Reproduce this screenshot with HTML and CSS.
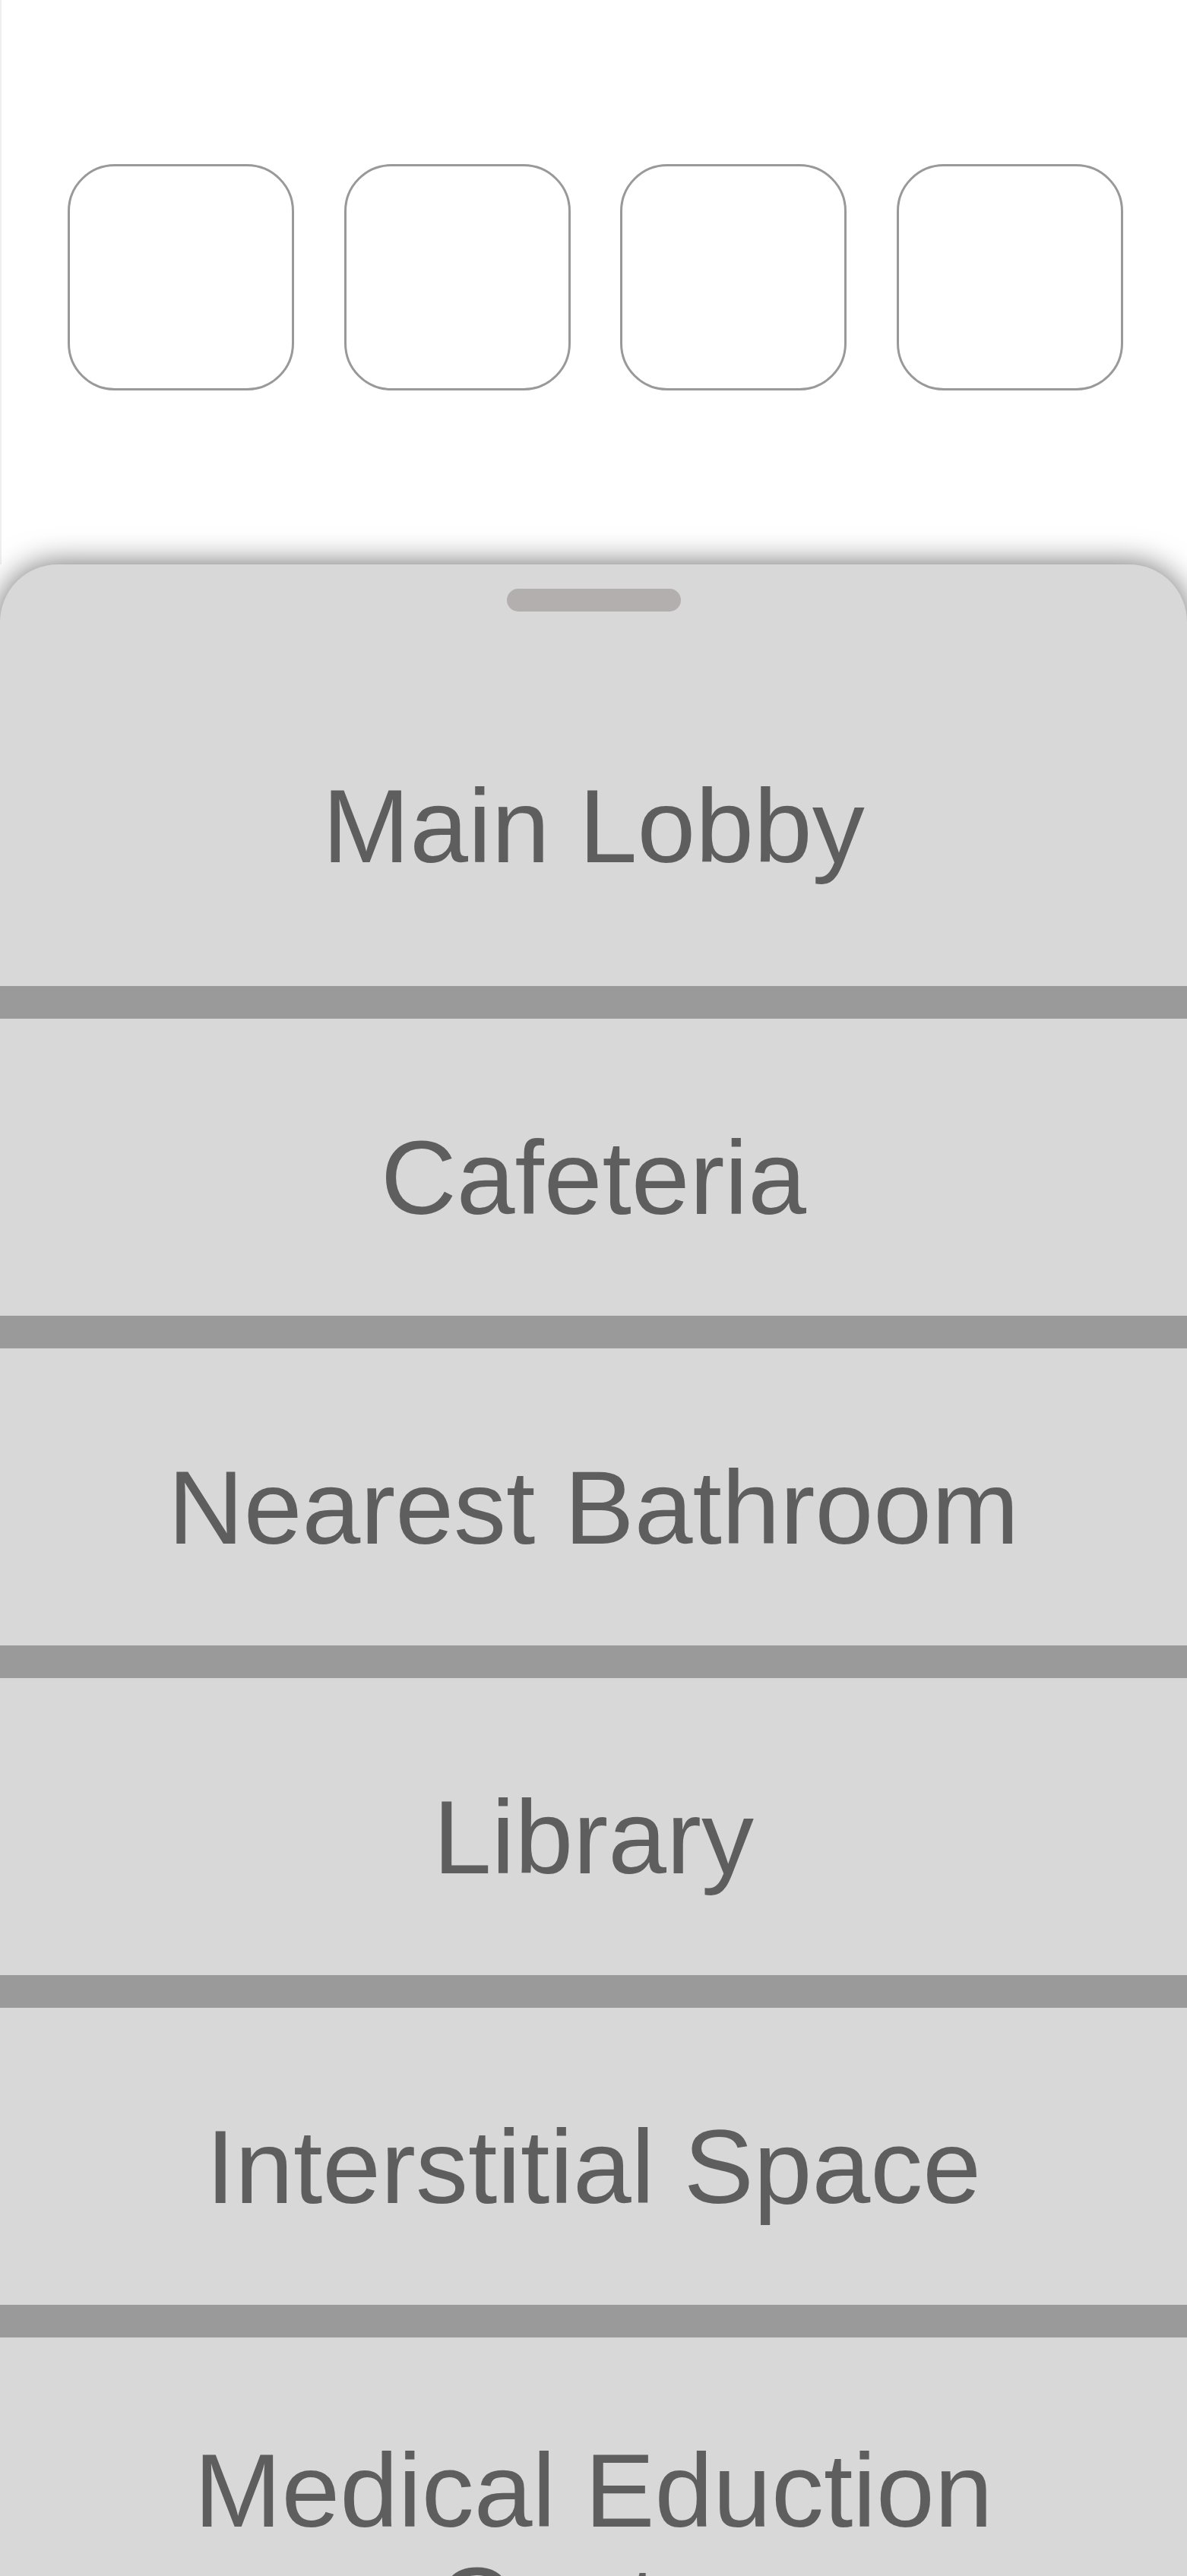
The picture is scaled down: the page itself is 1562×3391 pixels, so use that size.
FILE: index.html
```html
<!DOCTYPE html>
<html lang="en">
<head>
<meta charset="utf-8">
<title>Destinations</title>
<link rel="stylesheet" href="styles.css">
</head>
<body>
<div class="page">
  <section class="top">
    <div class="slots">
      <div class="slot"></div>
      <div class="slot"></div>
      <div class="slot"></div>
      <div class="slot"></div>
    </div>
  </section>
  <section class="sheet">
    <div class="handle"></div>
    <div class="row row-first">Main Lobby</div>
    <div class="bar"></div>
    <div class="row">Cafeteria</div>
    <div class="bar"></div>
    <div class="row">Nearest Bathroom</div>
    <div class="bar"></div>
    <div class="row">Library</div>
    <div class="bar"></div>
    <div class="row">Interstitial Space</div>
    <div class="bar"></div>
    <div class="row row-last">Medical Eduction Center</div>
  </section>
</div>
</body>
</html>
```

FILE: styles.css
```css
html, body {
  margin: 0;
  padding: 0;
  background: #ffffff;
  overflow: hidden;
}

.page {
  width: 1562px;
  height: 3391px;
  overflow: hidden;
  font-family: "Liberation Sans", Arial, sans-serif;
}

.top {
  height: 743px;
  box-sizing: border-box;
  border-left: 2px solid #efefef;
  background: #ffffff;
}

.slots {
  display: flex;
  gap: 65.7px;
  padding: 216px 0 0 87px;
}

.slot {
  width: 298px;
  height: 298px;
  box-sizing: border-box;
  border: 3.5px solid #999999;
  border-radius: 62px;
  background: #ffffff;
}

.sheet {
  position: relative;
  background: #d8d8d8;
  border-radius: 76px 76px 0 0;
  box-shadow: 0 0 42px rgba(0, 0, 0, 0.6);
  padding-top: 32px;
}

.handle {
  width: 229px;
  height: 30px;
  margin: 0 auto;
  border-radius: 15px;
  background: #b3afae;
}

.row {
  height: 391px;
  box-sizing: border-box;
  padding: 134px 60px 0;
  font-size: 138px;
  line-height: 150px;
  color: #5e5e5e;
  text-align: center;
}

.row-first {
  height: 493px;
  padding-top: 207px;
}

.row-last {
  height: auto;
  min-height: 391px;
  padding-top: 126px;
}

.bar {
  height: 43px;
  background: #9a9a9a;
}
```
